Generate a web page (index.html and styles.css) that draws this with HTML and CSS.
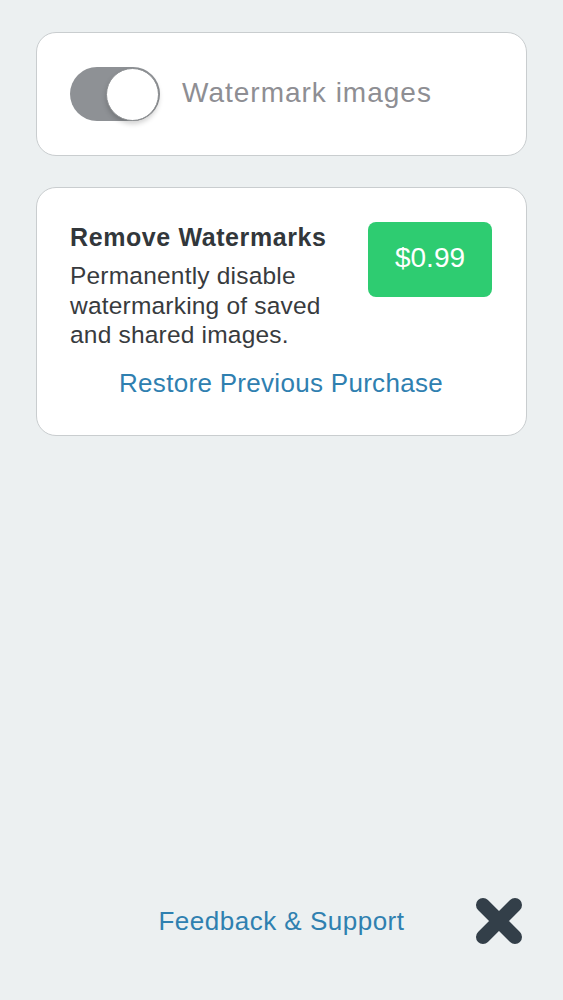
FILE: index.html
```html
<!DOCTYPE html>
<html>
<head>
<meta charset="utf-8">
<link rel="stylesheet" href="styles.css">
</head>
<body>
<div class="page">
  <main class="cards">
    <section class="card toggle-card">
      <div class="switch"><span class="knob"></span></div>
      <span class="toggle-label">Watermark images</span>
    </section>
    <section class="card purchase-card">
      <div class="purchase-row">
        <div class="purchase-text">
          <h2 class="title">Remove Watermarks</h2>
          <p class="desc">Permanently disable watermarking of saved and shared images.</p>
        </div>
        <button class="price">$0.99</button>
      </div>
      <a class="restore">Restore Previous Purchase</a>
    </section>
  </main>
  <footer class="footer">
    <span></span>
    <a class="feedback">Feedback &amp; Support</a>
    <svg class="close" width="48" height="48" viewBox="0 0 48 48">
      <path d="M8 8 L40 40 M40 8 L8 40" stroke="#333f49" stroke-width="14" stroke-linecap="round" fill="none"/>
    </svg>
  </footer>
</div>
</body>
</html>
```

FILE: styles.css
```css
* { box-sizing: border-box; }
html, body { margin: 0; padding: 0; }
body {
  background: #ecf0f1;
  font-family: "Liberation Sans", Arial, sans-serif;
  width: 563px;
}
.page {
  display: flex;
  flex-direction: column;
  min-height: 1000px;
  padding: 32px 36px 55px 36px;
}
.cards {
  display: flex;
  flex-direction: column;
  gap: 31px;
  flex: 1;
}
.card {
  background: #fff;
  border: 1px solid #c9cdcf;
  border-radius: 20px;
}
.toggle-card {
  height: 124px;
  display: flex;
  align-items: center;
  padding-left: 33px;
  gap: 22px;
}
.switch {
  width: 90px;
  height: 54px;
  border-radius: 27px;
  background: #8e9195;
  display: flex;
  justify-content: flex-end;
  align-items: center;
  padding-right: 1px;
}
.knob {
  width: 53px;
  height: 53px;
  border-radius: 50%;
  background: #fff;
  border: 1.5px solid #8a8d90;
  box-shadow: 0 3px 5px rgba(0,0,0,0.18);
}
.toggle-label {
  font-size: 28px;
  letter-spacing: 1px;
  color: #8e8e93;
  margin-bottom: 3px;
}
.purchase-card {
  padding: 34px 34px 37px 33px;
  display: flex;
  flex-direction: column;
}
.purchase-row {
  display: flex;
  gap: 28px;
}
.purchase-text { flex: 1; }
.title {
  margin: 0;
  font-size: 25px;
  letter-spacing: 0.6px;
  line-height: 30px;
  font-weight: bold;
  color: #32373b;
}
.desc {
  margin: 9px 0 0 0;
  font-size: 24.5px;
  letter-spacing: 0.2px;
  line-height: 29.5px;
  color: #383b3e;
}
.price {
  width: 124px;
  height: 75px;
  border: none;
  border-radius: 8px;
  background: #2ecc71;
  color: #fff;
  font-family: "Liberation Sans", Arial, sans-serif;
  font-size: 28px;
  padding: 0 0 4px 0;
  flex: none;
}
.restore {
  margin-top: 18px;
  text-align: center;
  font-size: 26px;
  letter-spacing: 0.3px;
  line-height: 30px;
  color: #2f80b0;
}
.footer {
  display: grid;
  grid-template-columns: 1fr auto 1fr;
  align-items: center;
  padding: 0 4px;
}
.feedback {
  font-size: 26px;
  letter-spacing: 0.5px;
  line-height: 30px;
  color: #2f80b0;
}
.close {
  justify-self: end;
  display: block;
}
```
